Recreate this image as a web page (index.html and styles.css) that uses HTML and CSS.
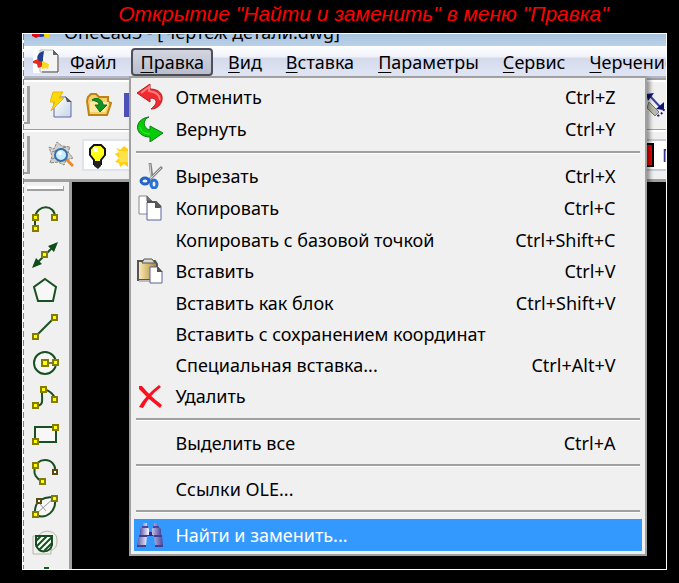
FILE: index.html
```html
<!DOCTYPE html>
<html lang="ru">
<head>
<meta charset="utf-8">
<title>Открытие "Найти и заменить"</title>
<link rel="stylesheet" href="styles.css">
</head>
<body>
<h1 class="caption">Открытие "Найти и заменить" в меню "Правка"</h1>
<main class="window">
  <header class="titlebar">
    <svg class="title-icon" width="18" height="18" viewBox="0 0 18 18"><circle cx="9" cy="9" r="6" fill="none" stroke="#23369a" stroke-width="4"/><path d="M0 12h8v4l-4 2-4-2z" fill="#e10a10"/><path d="M11 12l6 2v4h-4z" fill="#f5d800"/></svg>
    <span class="title-text">OneCad3 - [Чертеж детали.dwg]</span>
  </header>
  <nav class="menubar">
    <svg class="doc-icon" width="26" height="24" viewBox="0 0 26 24"><path d="M0 0h26v24H0z" fill="#fff"/><path d="M7 1h13l5 5v17H7z" fill="#f4f4f4" stroke="#bbb"/><path d="M20 1l5 5v17H9" fill="none" stroke="#555"/><path d="M20 1v5h5z" fill="#666"/><path d="M11 2C5 3 3 8 5 12l5 4V9z" fill="#23408f"/><path d="M0 12l5-2 1 2 5 1-1 4-5 2-1-4-4-1z" fill="#e52b20"/><path d="M9 12l7 3-1 5-2-1-4 1z" fill="#f8d820"/></svg>
    <ul class="menus">
      <li><button class="menu-button"><u>Ф</u>айл</button></li>
      <li class="open"><button class="menu-button" aria-expanded="true"><u>П</u>равка</button>
        <div class="dropdown">
          <button class="item with-icon"><svg width="26" height="26" viewBox="0 0 26 26"><path d="M0 9L13 0v5c9 0 13 5 12 11-1 5-5 9-11 9 7-5 7-11-1-11v4z" fill="#f02c30" stroke="#c01820"/><path d="M4 9l8-6v4c7 1 11 4 11 9" fill="none" stroke="#ff8080" stroke-width="2"/></svg><span>Отменить</span><kbd>Ctrl+Z</kbd></button>
          <button class="item with-icon"><svg width="26" height="26" viewBox="0 0 26 26"><path d="M12 1C6 3 5 12 13 14v-4l13 7-13 9v-5C-3 21-4 3 12 1z" fill="#08cc08" stroke="#078010"/><path d="M3 11c1 5 5 7 10 7" fill="none" stroke="#45ee45"/></svg><span>Вернуть</span><kbd>Ctrl+Y</kbd></button>
          <hr>
          <button class="item with-icon"><svg width="26" height="26" viewBox="0 0 26 26"><path d="M13 0l2 15M25 4L11 18" stroke="#858585" stroke-width="3"/><path d="M13 1l1 14M24 5L12 17" stroke="#d8d8d8"/><ellipse cx="8" cy="18" rx="4" ry="3" fill="none" stroke="#2265c9" stroke-width="3"/><ellipse cx="17" cy="21" rx="3" ry="4" fill="none" stroke="#2872d6" stroke-width="3"/></svg><span>Вырезать</span><kbd>Ctrl+X</kbd></button>
          <button class="item with-icon"><svg width="26" height="26" viewBox="0 0 26 26"><path d="M2 1h8l5 5v13H2z" fill="#fff" stroke="#888"/><path d="M10 1v5h5" fill="#777" stroke="#555"/><path d="M10 7h9l5 5v13H10z" fill="#fff" stroke="#5862a0"/><path d="M10 7h9l5 5" fill="none" stroke="#555" stroke-width="2"/><path d="M18 7v6h6z" fill="#555"/></svg><span>Копировать</span><kbd>Ctrl+C</kbd></button>
          <button class="item"><span>Копировать с базовой точкой</span><kbd>Ctrl+Shift+C</kbd></button>
          <button class="item with-icon"><svg width="26" height="26" viewBox="0 0 26 26"><defs><linearGradient id="board"><stop stop-color="#fff0be"/><stop offset="1" stop-color="#a9832e"/></linearGradient></defs><path d="M1 3h17l2 3v16H1z" fill="url(#board)" stroke="#555" stroke-width="2"/><path d="M2 23h12" stroke="#bbb" stroke-width="2"/><path d="M5 5l2-4h8l3 4z" fill="#d7dccb" stroke="#555"/><path d="M13 9h8l4 5v11H13z" fill="#fff" stroke="#5862a0"/><path d="M20 8v6h6z" fill="#555"/></svg><span>Вставить</span><kbd>Ctrl+V</kbd></button>
          <button class="item"><span>Вставить как блок</span><kbd>Ctrl+Shift+V</kbd></button>
          <button class="item"><span>Вставить с сохранением координат</span></button>
          <button class="item"><span>Специальная вставка...</span><kbd>Ctrl+Alt+V</kbd></button>
          <button class="item with-icon"><svg width="26" height="26" viewBox="0 0 26 26"><path d="M2 3l3 0q8 10 20 19l-2 3Q11 16 2 6zM22 2l2 2Q12 13 6 25l-4-1Q8 13 22 2z" fill="#fb1020"/></svg><span>Удалить</span></button>
          <hr>
          <button class="item"><span>Выделить все</span><kbd>Ctrl+A</kbd></button>
          <hr>
          <button class="item"><span>Ссылки OLE...</span></button>
          <hr>
          <button class="item with-icon selected"><svg width="26" height="26" viewBox="0 0 26 26"><defs><linearGradient id="tube"><stop stop-color="#5a57a8"/><stop offset=".4" stop-color="#f4f2ff"/><stop offset="1" stop-color="#4a459c"/></linearGradient></defs><path d="M10 10h6v4h-6z" fill="#332d83"/><path d="M6 1h4v3l2 3v6H3V7l3-3zM17 1h4v3l3 3v6h-9V7l2-3z" fill="url(#tube)"/><path d="M5 5h6M16 5h6" stroke="#4b469d" stroke-width="2"/><path d="M2 13h8l-1 11H0zM17 13h8l1 11h-8z" fill="url(#tube)"/><path d="M2 14h8M17 14h8M0 24h9M18 24h8" stroke="#433d8d" stroke-width="2"/></svg><span>Найти и заменить...</span></button>
        </div>
      </li>
      <li><button class="menu-button"><u>В</u>ид</button></li>
      <li><button class="menu-button"><u>В</u>ставка</button></li>
      <li><button class="menu-button"><u>П</u>араметры</button></li>
      <li><button class="menu-button"><u>С</u>ервис</button></li>
      <li><button class="menu-button"><u>Ч</u>ерчение</button></li>
    </ul>
  </nav>
  <section class="toolbar">
    <i class="grip"></i>
    <button class="tool" aria-label="Создать"><svg width="22" height="28" viewBox="0 0 22 28"><defs><linearGradient id="page" x2="1" y2="1"><stop stop-color="#fff"/><stop offset="1" stop-color="#c7d6e6"/></linearGradient></defs><path d="M4 6h12l5 5v15H4z" fill="url(#page)" stroke="#5f68aa"/><path d="M15 5l7 6h-5z" fill="#556"/><path d="M3 1h10l-4 6h5L1 20l4-9H0z" fill="#ffd809" stroke="#e8b800"/></svg></button>
    <button class="tool" aria-label="Открыть"><svg width="26" height="24" viewBox="0 0 26 24"><path d="M2 4l3-3h5l3 3h9v5l3 1-4 12H3L1 8z" fill="#f4cf6d" stroke="#bf8213" stroke-width="2"/><path d="M4 9h19l-4 10H4z" fill="#ffe9a0"/><path d="M6 7c5-4 11 0 11 5h4l-7 7-5-7h4c0-3-3-4-7-5z" fill="#12941d" stroke="#08701a"/></svg></button>
    <svg class="save" width="24" height="24" viewBox="0 0 24 24"><path d="M0 0h24v24H0z" fill="#4d50b7"/><path d="M5 0h14v12H5z" fill="#e9e9ff"/></svg>
    <svg class="edge" width="20" height="28" viewBox="0 0 20 28"><path d="M1 17l8 8 4-4L3 11z" fill="#bbb9a7" stroke="#777"/><path d="M4 5l12 13" stroke="#38409c" stroke-width="2"/><path d="M0 3l8-1-6 8zM10 18l8-7v8z" fill="#111477"/><path d="M18 18q-1 5-7 7" fill="none" stroke="#17178c" stroke-dasharray="2 2" stroke-width="2"/></svg>
  </section>
  <section class="toolbar layers">
    <i class="grip"></i>
    <button class="tool" aria-label="Показать"><svg width="26" height="27" viewBox="0 0 26 27"><path d="M1 6l5 2 3-7 5 4 8 1-2 5 5 6-7 2-2 5-6-3-8 1 2-7z" fill="#d4d2c8" stroke="#878781" stroke-dasharray="3 1"/><path d="M4 11l14-5M4 18l16-7" stroke="#789"/><path d="M18 18l7 7" stroke="#ed8b2a" stroke-width="3"/><circle cx="13" cy="14" r="6" fill="#c8edff" stroke="#356fae" stroke-width="2"/><circle cx="12" cy="12" r="2" fill="#fff"/></svg></button>
    <div class="layer-box"><svg width="40" height="26" viewBox="0 0 40 26"><path d="M6 2h7l4 4v6l-4 5v4H6v-4l-4-5V6z" fill="#ffff18" stroke="#111" stroke-width="2"/><path d="M6 18h7v5l-3 3-4-3z" fill="#222"/><path d="M5 4h5v5H5z" fill="#fff"/><path d="M28 4l4 3 4-4 4 3v18l-4-3-4 3-1-4-4-1 4-4-4-4 4-2z" fill="#ffd012"/><path d="M31 8h9v11h-9z" fill="#ffe34c"/></svg></div>
    <div class="color-box"><i></i><span>ПоСлою</span></div>
  </section>
  <section class="workspace">
    <aside class="palette">
      <i class="palette-grip"></i>
      <button aria-label="Полилиния"><svg viewBox="0 0 28 28"><path class="l" d="M4 24V12C6-1 24-1 24 12"/><path class="p" d="M2 10h5v5H2zM2 21h5v5H2zM21 10h5v5h-5z"/></svg></button>
      <button aria-label="Луч"><svg viewBox="0 0 28 28"><path class="l" d="M3 25L25 3"/><path d="M27 1l-10 4 6 6zM1 27l4-10 6 6z" fill="#104c18"/><path class="p" d="M11 11h5v5h-5z"/></svg></button>
      <button aria-label="Многоугольник"><svg viewBox="0 0 28 28"><path class="l f" d="M14 2l11 8-3 14H7L3 10z"/></svg></button>
      <button aria-label="Отрезок"><svg viewBox="0 0 28 28"><path class="l" d="M4 24L24 4"/><path class="p" d="M2 21h5v5H2zM21 2h5v5h-5z"/></svg></button>
      <button aria-label="Окружность"><svg viewBox="0 0 28 28"><circle class="l f" cx="14" cy="14" r="11"/><path d="M14 14h10" stroke="#777" stroke-width="2"/><path class="p" d="M11 11h6v6h-6zM22 11h5v5h-5z"/></svg></button>
      <button aria-label="Сплайн"><svg viewBox="0 0 28 28"><path class="l" d="M4 21c9 0 7-5 7-12 0-9 10-2 13 4"/><path class="p" d="M2 18h5v5H2zM10 2h5v5h-5zM21 12h5v5h-5z"/></svg></button>
      <button aria-label="Прямоугольник"><svg viewBox="0 0 28 28"><path class="l f" d="M4 6h21v15H4z"/><path class="p" d="M2 18h5v5H2zM22 4h5v5h-5z"/></svg></button>
      <button aria-label="Дуга"><svg viewBox="0 0 28 28"><path class="l" d="M11 24C-1 20 2 3 14 3c7 0 11 6 10 11"/><path class="p" d="M2 6h5v5H2zM9 22h5v5H9z"/><path class="w" d="M22 13h4v4h-4z"/></svg></button>
      <button aria-label="Эллипс"><svg viewBox="0 0 28 28"><path class="l f" d="M4 22C3 9 9 4 24 4c2 14-8 23-20 18z"/><path d="M5 21L23 5M9 11l6 7" stroke="#999"/><path class="p" d="M2 19h5v5H2zM21 3h5v5h-5z"/><path class="w" d="M6 6h4v4H6z"/></svg></button>
      <button aria-label="Штриховка"><svg viewBox="0 0 28 28"><path d="M2 7h18v18H2zM8 7c2-7 19-7 18 5 0 5-2 9-6 9" fill="none" stroke="#b5b3a5" stroke-width="1"/><path d="M5 7h16v9c-2 8-13 9-16 0z" fill="#f8fff8" stroke="#174f20" stroke-width="2"/><path d="M5 12l5-5M5 18L16 7M8 21L21 8M13 22l8-8" stroke="#174f20" stroke-width="2"/></svg></button>
      <button aria-label="Точка"><svg viewBox="0 0 28 28"><path d="M13 2h5v3h3v12h-9V5h1z" fill="#0a6410"/></svg></button>
    </aside>
    <div class="canvas"></div>
  </section>
</main>
</body>
</html>
```
FILE: styles.css
```css
* { box-sizing: border-box; }
html, body { height: 100%; }
body {
  margin: 0;
  padding: 0 12px 13px 22px;
  display: flex;
  flex-direction: column;
  overflow: hidden;
  background: #000;
  color: #000;
  font: 18px/24px "Noto Sans", sans-serif;
}
button { margin: 0; padding: 0; border: 0; background: none; color: inherit; font: inherit; }
svg { display: block; flex: none; }
.caption {
  flex: none;
  height: 33px;
  margin: 0;
  padding: 2px 0 0 38px;
  text-align: center;
  white-space: nowrap;
  color: #f00;
  font: italic 21px/24px "Liberation Sans", sans-serif;
}
.window {
  flex: 1;
  min-height: 0;
  display: flex;
  flex-direction: column;
  overflow: hidden;
  border: 1px solid #fff;
  padding-left: 1px;
  background: repeating-linear-gradient(#3b8eea 0, #3b8eea 6px, #fff 6px, #fff 9px);
}
.titlebar {
  flex: none;
  height: 12px;
  display: flex;
  align-items: flex-end;
  gap: 14px;
  padding-left: 8px;
  overflow: hidden;
  background: linear-gradient(#a9c4e0, #bad0e8);
}
.title-icon { margin-bottom: 8px; }
.title-text { margin-bottom: 5px; line-height: 18px; white-space: nowrap; }
.menubar {
  flex: none;
  height: 32px;
  display: flex;
  align-items: flex-start;
  padding: 2px 0 0 9px;
  border-bottom: 2px solid #b3b7cb;
  background: linear-gradient(#fff 0, #f0f2fa 11px, #d4daeb 12px, #e1e6f5 100%);
}
.doc-icon { margin-top: 1px; }
.menus { display: flex; gap: 6px; margin: 0; padding: 0 0 0 2px; list-style: none; }
.menus li { position: relative; }
.menu-button { height: 28px; padding: 0 9px; white-space: nowrap; }
.menu-button u { text-underline-offset: 3px; text-decoration-thickness: 1px; }
.open .menu-button {
  border: 2px solid #4d4f5b;
  border-radius: 4px;
  padding: 0 7px;
  background: linear-gradient(#d3d6e0, #b9bdcd);
}
.dropdown {
  position: absolute;
  z-index: 2;
  top: 28px;
  left: -2px;
  width: 518px;
  padding: 3px;
  border: 2px solid #a0a0a0;
  background: #f0f0f0;
  box-shadow: 3px 3px 4px rgba(0, 0, 0, .4);
}
.item {
  width: 100%;
  height: 31px;
  display: flex;
  align-items: center;
  padding: 0 27px 0 41px;
  text-align: left;
  white-space: nowrap;
}
.item span { flex: 1; }
.item kbd { font: inherit; }
.with-icon { height: 32px; padding-left: 3px; gap: 12px; }
.selected { background: #3399ff; color: #fff; }
hr {
  height: 3px;
  margin: 6px 2px;
  border: 0;
  border-top: 2px solid #a0a0a0;
  background: #fff;
}
.toolbar {
  flex: none;
  height: 52px;
  display: flex;
  align-items: center;
  gap: 14px;
  border-top: 2px solid #a0a0a0;
  border-bottom: 1px solid #a0a0a0;
  background: #f0f0f0;
  box-shadow: inset 0 2px #fff;
}
.grip { width: 6px; height: 38px; border: solid #a0a0a0; border-width: 0 3px 2px 0; flex: none; }
.tool { margin-left: 6px; }
.save { margin-left: -2px; }
.tool + .tool { margin-left: 0; }
.edge { margin-left: auto; }
.layers { height: 50px; border-top: 0; }
.layers .tool { margin-left: 4px; }
.layer-box { height: 32px; flex: 1; border: 2px solid #dfe4eb; padding: 2px 4px; background: #fff; margin-left: -6px; }
.color-box { width: 32px; height: 32px; display: flex; gap: 8px; align-items: center; overflow: hidden; background: #fff; color: #238; border: solid #c8ccd4; border-width: 2px 0; }
.color-box i { flex: none; width: 20px; height: 24px; border: 2px solid #000; background: #f00000; }
.workspace { flex: 1; min-height: 0; display: flex; border-top: 2px solid #a0a0a0; }
.palette { width: 48px; flex: none; overflow: hidden; background: #f0f0f0; border-right: 3px solid #a0a0a0; }
.palette-grip { display: block; width: 37px; height: 5px; margin: 4px 0 10px 3px; border: solid #a0a0a0; border-width: 0 1px 2px 0; background: #fff; }
.palette button { display: block; height: 36px; padding-left: 7px; }
.palette svg { width: 28px; height: 28px; }
.l { fill: none; stroke: #195022; stroke-width: 2; }
.f { fill: #f7f7f7; }
.p { fill: #ff0; stroke: #827c00; stroke-width: 2; }
.w { fill: #fff; stroke: #5c4b10; stroke-width: 2; }
.canvas { flex: 1; background: #000; }
```
